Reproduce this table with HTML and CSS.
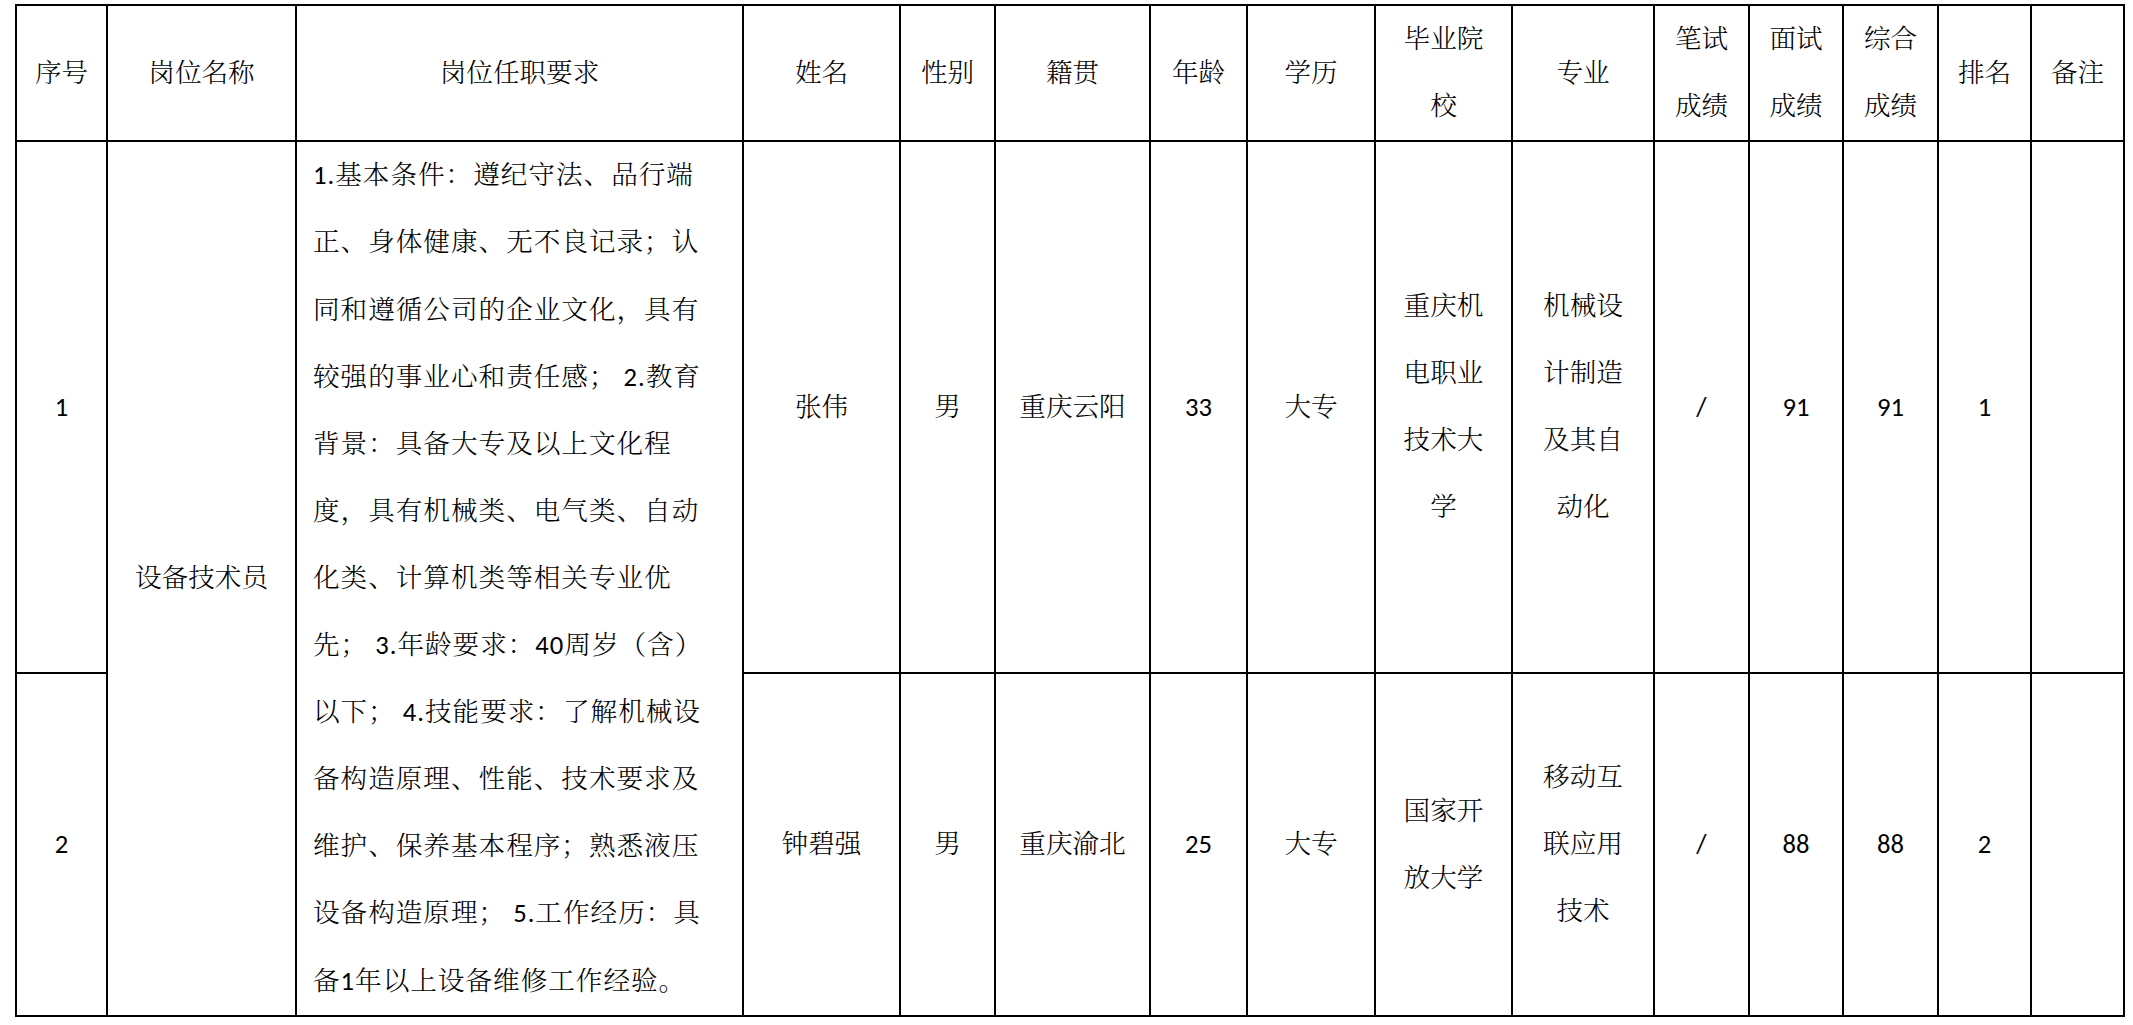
FILE: index.html
```html
<!DOCTYPE html>
<html lang="zh-CN">
<head>
<meta charset="utf-8">
<title>设备技术员</title>
<link rel="stylesheet" href="styles.css">
</head>
<body>
<div class="page">
<table class="grid">
  <colgroup>
    <col class="c-no"><col class="c-post"><col class="c-req"><col class="c-name"><col class="c-sex">
    <col class="c-home"><col class="c-age"><col class="c-edu"><col class="c-school"><col class="c-major">
    <col class="c-written"><col class="c-interview"><col class="c-total"><col class="c-rank"><col class="c-note">
  </colgroup>
  <tr class="r-head">
    <th>序号</th>
    <th>岗位名称</th>
    <th>岗位任职要求</th>
    <th>姓名</th>
    <th>性别</th>
    <th>籍贯</th>
    <th>年龄</th>
    <th>学历</th>
    <th>毕业院<br>校</th>
    <th>专业</th>
    <th>笔试<br>成绩</th>
    <th>面试<br>成绩</th>
    <th>综合<br>成绩</th>
    <th>排名</th>
    <th>备注</th>
  </tr>
  <tr class="r-one">
    <td class="num">1</td>
    <td rowspan="2">设备技术员</td>
    <td rowspan="2" class="req">1.基本条件：遵纪守法、品行端<br>正、身体健康、无不良记录；认<br>同和遵循公司的企业文化，具有<br>较强的事业心和责任感； 2.教育<br>背景：具备大专及以上文化程<br>度，具有机械类、电气类、自动<br>化类、计算机类等相关专业优<br>先； 3.年龄要求：40周岁（含）<br>以下； 4.技能要求：了解机械设<br>备构造原理、性能、技术要求及<br>维护、保养基本程序；熟悉液压<br>设备构造原理； 5.工作经历：具<br>备1年以上设备维修工作经验。</td>
    <td>张伟</td>
    <td>男</td>
    <td>重庆云阳</td>
    <td class="num">33</td>
    <td>大专</td>
    <td>重庆机<br>电职业<br>技术大<br>学</td>
    <td>机械设<br>计制造<br>及其自<br>动化</td>
    <td class="num">/</td>
    <td class="num">91</td>
    <td class="num">91</td>
    <td class="num">1</td>
    <td></td>
  </tr>
  <tr class="r-two">
    <td class="num">2</td>
    <td>钟碧强</td>
    <td>男</td>
    <td>重庆渝北</td>
    <td class="num">25</td>
    <td>大专</td>
    <td>国家开<br>放大学</td>
    <td>移动互<br>联应用<br>技术</td>
    <td class="num">/</td>
    <td class="num">88</td>
    <td class="num">88</td>
    <td class="num">2</td>
    <td></td>
  </tr>
</table>
</div>
</body>
</html>
```

FILE: styles.css
```css
html, body {
  margin: 0;
  padding: 0;
  background: #ffffff;
}

.page {
  padding: 4px 0 0 15px;
}

.grid {
  border-collapse: collapse;
  table-layout: fixed;
  width: 2110px;
  color: #000000;
  font-family: "Carlito", "Calibri", "Lato", "SimSun", "Noto Serif CJK SC", "Noto Sans CJK SC", sans-serif;
  font-size: 26.6px;
  font-weight: 300;
  line-height: 67px;
}

.grid th,
.grid td {
  border: 2px solid #000000;
  padding: 0 4px;
  text-align: center;
  vertical-align: middle;
  font-weight: 300;
  overflow: hidden;
}

.c-no { width: 91px; }
.c-post { width: 189px; }
.c-req { width: 447px; }
.c-name { width: 157px; }
.c-sex { width: 95px; }
.c-home { width: 155px; }
.c-age { width: 97px; }
.c-edu { width: 128px; }
.c-school { width: 137px; }
.c-major { width: 142px; }
.c-written { width: 95px; }
.c-interview { width: 94px; }
.c-total { width: 95px; }
.c-rank { width: 93px; }
.c-note { width: 93px; }

.r-head { height: 136px; }
.r-one { height: 532px; }
.r-two { height: 343px; }

.grid td.req {
  text-align: left;
  padding: 0 0 0 16px;
  letter-spacing: 1px;
  line-height: 67.1px;
  white-space: nowrap;
}

.grid td.num {
  font-weight: 400;
}
```
